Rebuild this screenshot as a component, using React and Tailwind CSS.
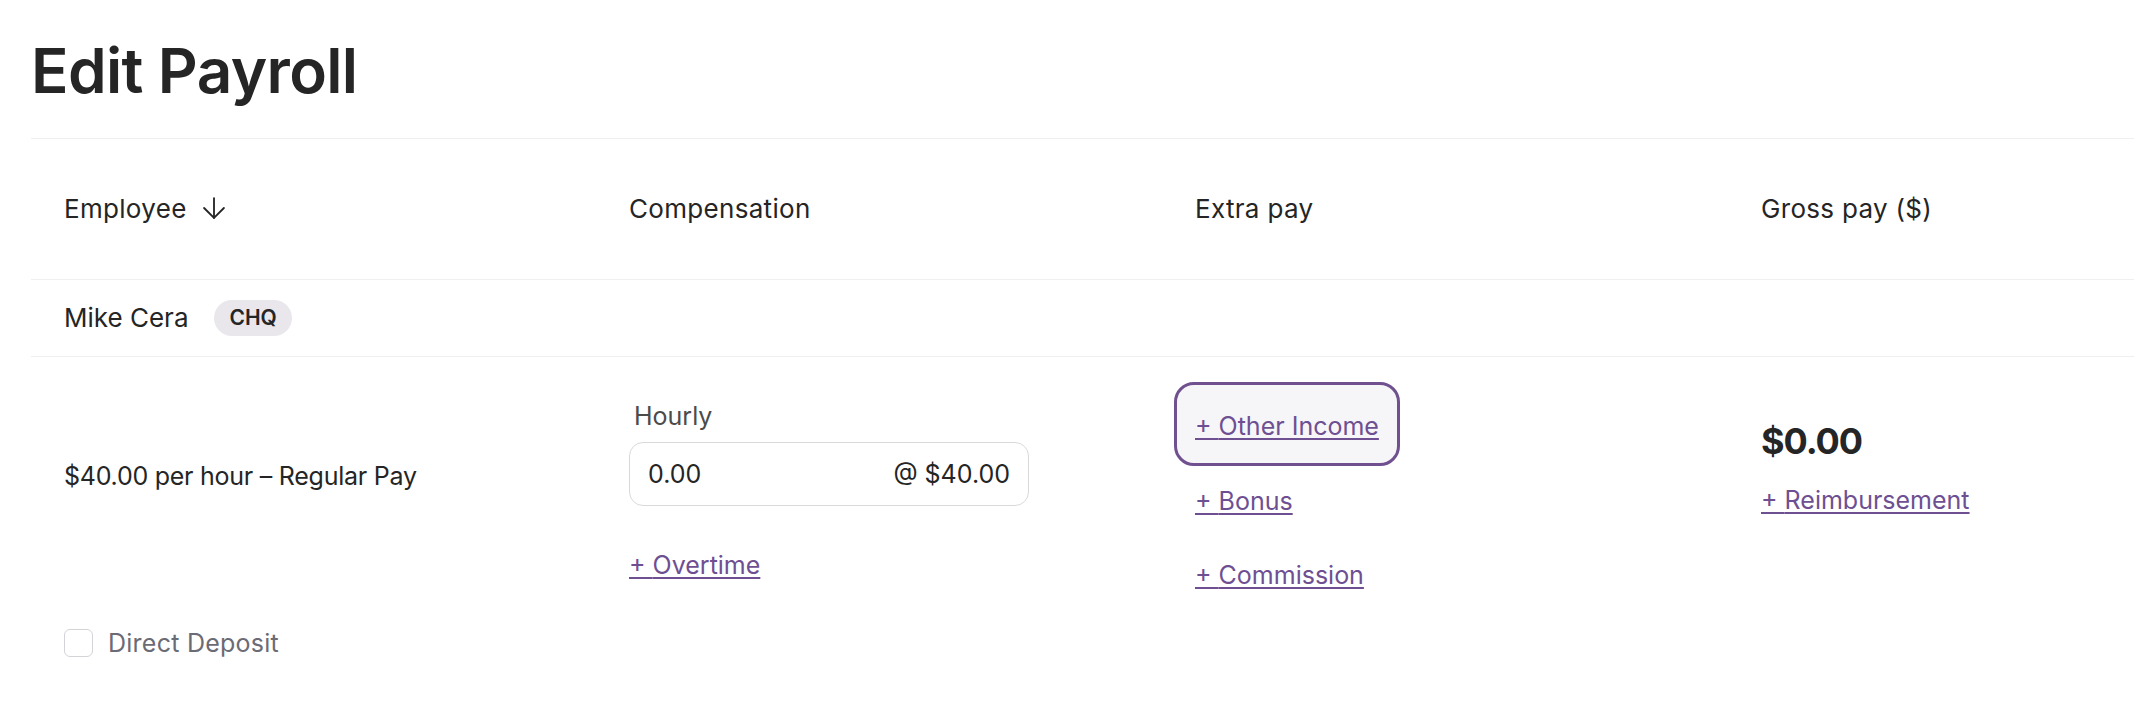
import React, { useState } from "react";
import { ArrowDown } from "lucide-react";

const FONT = { fontFamily: "Inter, 'Noto Sans', sans-serif" };

function AddLink({ children, className = "" }) {
  return (
    <button
      type="button"
      className={`text-left text-[25px] leading-[32px] text-[#6e4f92] underline decoration-[1.5px] underline-offset-[3px] ${className}`}
    >
      + {children}
    </button>
  );
}

export default function App() {
  const [hours, setHours] = useState("0.00");
  const [directDeposit, setDirectDeposit] = useState(false);

  return (
    <div className="min-h-screen w-full overflow-hidden bg-white text-[#252525]" style={FONT}>
      <div className="pl-[31px] pt-[40px]">
        <h1 className="text-[62px] font-semibold leading-none tracking-[-0.01em] mb-[36px]">
          Edit Payroll
        </h1>

        <div className="w-[2264px]">
          {/* header */}
          <div className="grid grid-cols-[566px_566px_566px_566px] h-[142px] items-center border-y border-[#efefef] text-[26px] leading-[32px] tracking-[0.012em]">
            <div className="pl-[33px] flex items-center gap-[10px]">
              <span>Employee</span>
              <ArrowDown size={34} strokeWidth={1.3} className="-mt-[2px]" />
            </div>
            <div className="pl-[32px]">Compensation</div>
            <div className="pl-[32px]">Extra pay</div>
            <div className="pl-[32px]">Gross pay ($)</div>
          </div>

          {/* employee name */}
          <div className="h-[77px] flex items-center gap-[26px] pl-[33px] border-b border-[#efefef]">
            <span className="text-[26px] leading-[32px]">Mike Cera</span>
            <span className="h-[36px] px-[15px] flex items-center rounded-full bg-[#e9e7ec] text-[21px] font-semibold">
              CHQ
            </span>
          </div>

          {/* pay row */}
          <div className="grid grid-cols-[566px_566px_566px_566px] text-[25px] leading-[32px]">
            <div className="pl-[33px] pt-[103px] flex flex-col">
              <span className="tracking-[-0.01em]">$40.00 per hour – Regular Pay</span>
              <label className="mt-[135px] flex items-center gap-[15px] text-[#6b6b75] cursor-pointer">
                <input
                  type="checkbox"
                  checked={directDeposit}
                  onChange={(e) => setDirectDeposit(e.target.checked)}
                  className="appearance-none w-[29px] h-[28px] rounded-[6px] border border-[#d4d4d8] bg-white checked:bg-[#6e4f92]"
                />
                <span className="tracking-[0.01em]">Direct Deposit</span>
              </label>
            </div>

            <div className="pl-[32px] pt-[43px] flex flex-col items-start">
              <span className="pl-[5px] text-[#4b4b4b]">Hourly</span>
              <div className="mt-[10px] w-[400px] h-[64px] rounded-[14px] border border-[#d9d9d9] px-[18px] flex items-center">
                <input
                  value={hours}
                  onChange={(e) => setHours(e.target.value)}
                  className="flex-1 min-w-0 bg-transparent outline-none text-[#252525]"
                />
                <span>@ $40.00</span>
              </div>
              <AddLink className="mt-[43px]">Overtime</AddLink>
            </div>

            <div className="pl-[32px] pt-[25px] flex flex-col items-start">
              <div className="-ml-[21px] rounded-[20px] border-[3px] border-[#70508f] bg-[#f6f6f8] pl-[18px] pr-[18px] pt-[25px] pb-[21px]">
                <AddLink>Other Income</AddLink>
              </div>
              <AddLink className="mt-[19px]">Bonus</AddLink>
              <AddLink className="mt-[42px]">Commission</AddLink>
            </div>

            <div className="pl-[32px] pt-[62px] flex flex-col items-start">
              <span className="text-[36px] leading-[44px] font-bold tracking-[-0.03em]">$0.00</span>
              <AddLink className="mt-[21px]">Reimbursement</AddLink>
            </div>
          </div>
        </div>
      </div>
    </div>
  );
}
